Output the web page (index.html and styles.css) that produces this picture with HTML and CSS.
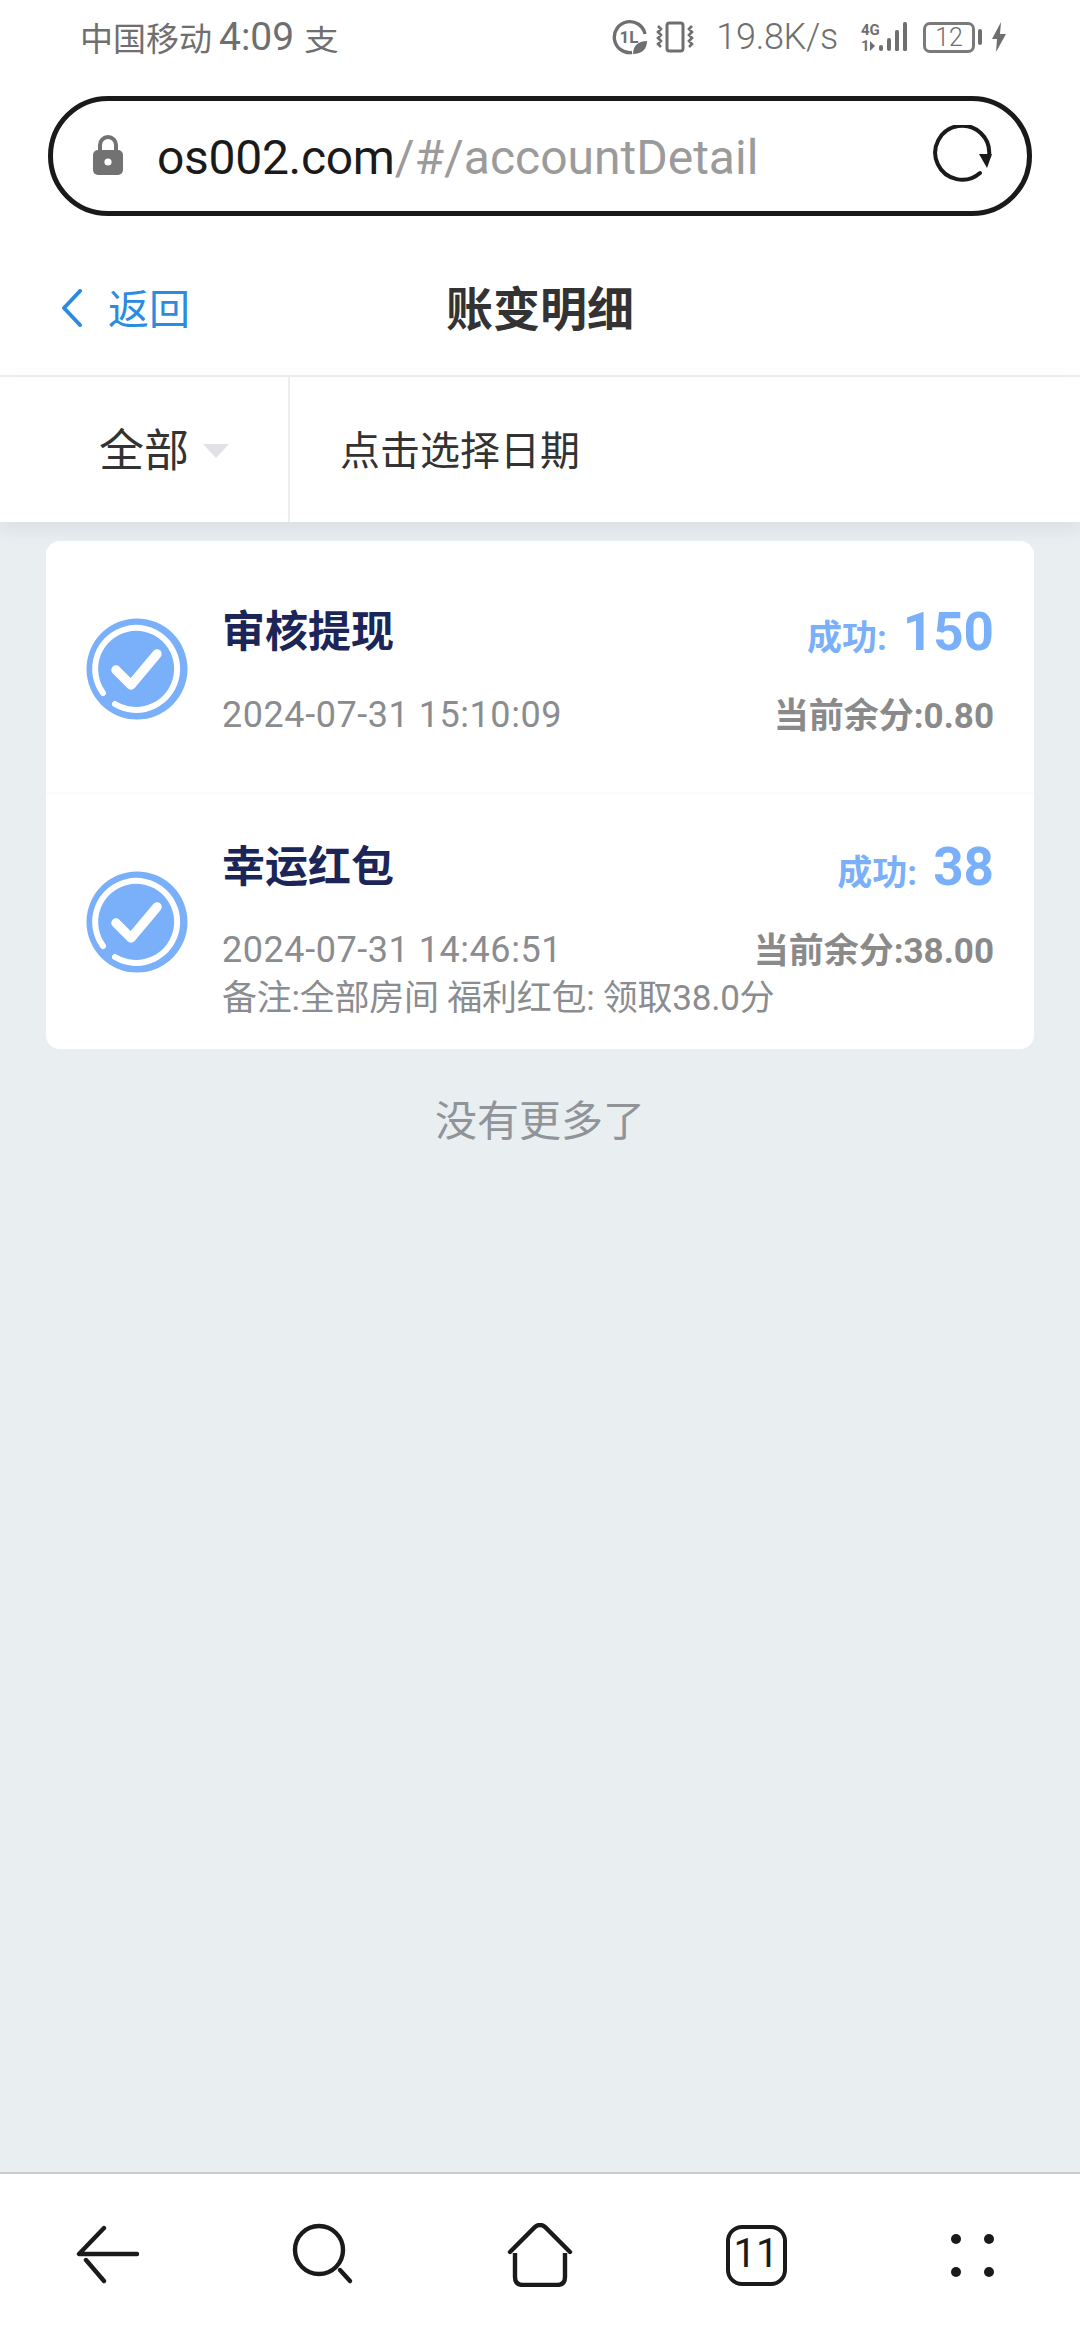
FILE: index.html
```html
<!DOCTYPE html>
<html lang="zh-CN">
<head>
<meta charset="utf-8">
<title>账变明细</title>
<link rel="stylesheet" href="styles.css">
</head>
<body>
<div class="page">
  <header class="status">
    <div class="status-left">
      <span class="carrier">中国移动</span>
      <span class="clock">4:09</span>
      <span class="alipay">支</span>
    </div>
    <div class="status-right">
      <svg class="ic-data" width="36" height="36" viewBox="0 0 36 36"><path d="M20 33.5A15.5 15.5 0 1 1 33 15" fill="none" stroke="#6f6f6f" stroke-width="3.4"/><text x="7.5" y="24" class="ic-data-text">1L</text><path d="M21 35c0-8 5-13 14-13 0 8-5 13-14 13z" fill="#6f6f6f"/></svg>
      <svg class="ic-vib" width="38" height="32" viewBox="0 0 38 32"><rect x="11" y="2" width="16" height="28" rx="2.5" fill="none" stroke="#6f6f6f" stroke-width="3"/><path d="M2 5l3 3-3 3 3 3-3 3 3 3-3 3 3 3M36 5l-3 3 3 3-3 3 3 3-3 3 3 3-3 3" fill="none" stroke="#6f6f6f" stroke-width="2.6"/></svg>
      <span class="speed">19.8K/s</span>
      <svg class="ic-sig" width="50" height="32" viewBox="0 0 50 32"><text x="1" y="14" class="ic-sig-text">4G</text><text x="1" y="30" class="ic-sig-text">1</text><path d="M10 20v10l5-5z" fill="#6f6f6f"/><rect x="19" y="24" width="4" height="6" rx="2" fill="#6f6f6f"/><rect x="27" y="17" width="4" height="13" rx="2" fill="#6f6f6f"/><rect x="35" y="9" width="4" height="21" rx="1.5" fill="#6f6f6f"/><rect x="43" y="1" width="4" height="29" rx="1.5" fill="#6f6f6f"/></svg>
      <div class="battery"><span class="battery-num">12</span></div>
      <span class="battery-nub"></span>
      <svg class="ic-bolt" width="14" height="30" viewBox="0 0 14 30"><path d="M9 0L0 17h5l-1 13 10-18H8z" fill="#6f6f6f"/></svg>
    </div>
  </header>

  <div class="urlwrap">
    <div class="urlbar">
      <svg class="lock" width="30" height="40" viewBox="0 0 30 40"><path d="M7 17v-7a8 8 0 0 1 16 0v7" fill="none" stroke="#727272" stroke-width="4"/><rect x="0" y="15" width="30" height="25" rx="5" fill="#727272"/><circle cx="15" cy="27" r="3.6" fill="#fff"/></svg>
      <div class="url"><span class="url-host">os002.com</span><span class="url-path">/#/accountDetail</span></div>
      <svg class="reload" width="62" height="62" viewBox="0 0 62 62"><path d="M49 48A27 27 0 1 1 58 31" fill="none" stroke="#1a1a1a" stroke-width="4" stroke-linecap="round"/><path d="M51 29h13l-5 14z" fill="#1a1a1a" transform="translate(-3 0)"/></svg>
    </div>
  </div>

  <nav class="topnav">
    <div class="back">
      <svg width="22" height="38" viewBox="0 0 22 38"><path d="M19 2L3 19l16 17" fill="none" stroke="#2b8ae2" stroke-width="4" stroke-linecap="round" stroke-linejoin="round"/></svg>
      <span class="back-text">返回</span>
    </div>
    <h1 class="title">账变明细</h1>
  </nav>

  <section class="filter">
    <div class="filter-type"><span class="filter-label">全部</span><i class="caret"></i></div>
    <div class="filter-date"><span class="filter-label">点击选择日期</span></div>
  </section>

  <main class="content">
    <div class="card">
      <div class="item item-first">
        <svg class="check" width="102" height="102" viewBox="0 0 102 102"><circle cx="51" cy="51" r="50.5" fill="#7aaffa"/><path d="M17 75A41 41 0 1 1 29 86" fill="none" stroke="#fff" stroke-width="6" stroke-linecap="round"/><path d="M30 52l15 15 26-31" fill="none" stroke="#fff" stroke-width="9.5" stroke-linecap="round" stroke-linejoin="round"/></svg>
        <div class="body body-a">
          <div class="row row-top"><span class="name">审核提现</span><span class="result"><span class="state">成功:</span><span class="amount">150</span></span></div>
          <div class="row row-sub"><span class="time">2024-07-31 15:10:09</span><span class="balance">当前余分:0.80</span></div>
        </div>
      </div>
      <div class="item">
        <svg class="check" width="102" height="102" viewBox="0 0 102 102"><circle cx="51" cy="51" r="50.5" fill="#7aaffa"/><path d="M17 75A41 41 0 1 1 29 86" fill="none" stroke="#fff" stroke-width="6" stroke-linecap="round"/><path d="M30 52l15 15 26-31" fill="none" stroke="#fff" stroke-width="9.5" stroke-linecap="round" stroke-linejoin="round"/></svg>
        <div class="body body-b">
          <div class="row row-top"><span class="name">幸运红包</span><span class="result"><span class="state">成功:</span><span class="amount">38</span></span></div>
          <div class="row row-sub"><span class="time">2024-07-31 14:46:51</span><span class="balance">当前余分:38.00</span></div>
          <div class="note">备注:全部房间 福利红包: 领取38.0分</div>
        </div>
      </div>
    </div>
    <p class="nomore">没有更多了</p>
  </main>

  <footer class="bottom">
    <div class="tab"><svg width="64" height="60" viewBox="0 0 64 60"><path d="M28 3L3 29h58M10 35l18 21" fill="none" stroke="#1a1a1a" stroke-width="4.4" stroke-linecap="round" stroke-linejoin="round"/></svg></div>
    <div class="tab"><svg width="64" height="64" viewBox="0 0 64 64"><circle cx="27" cy="27" r="24" fill="none" stroke="#1a1a1a" stroke-width="4.4"/><path d="M48 47l10 11" fill="none" stroke="#1a1a1a" stroke-width="4.4" stroke-linecap="round"/></svg></div>
    <div class="tab"><svg width="66" height="64" viewBox="0 0 66 64"><path d="M3 29L28 4q5-4 10 0l25 25" fill="none" stroke="#1a1a1a" stroke-width="4.4" stroke-linecap="round"/><path d="M8 30v24q0 8 8 8h34q8 0 8-8V30" fill="none" stroke="#1a1a1a" stroke-width="4.4"/></svg></div>
    <div class="tab"><div class="tabs-count">11</div></div>
    <div class="tab"><div class="dots"><i></i><i></i><i></i><i></i></div></div>
  </footer>
</div>
</body>
</html>
```
FILE: styles.css
```css
* { box-sizing: border-box; }
html, body { margin: 0; padding: 0; }
body { font-family: Roboto, "Noto Sans CJK SC", sans-serif; background: #e9eef1; }
.page { width: 1080px; height: 2340px; display: flex; flex-direction: column; background: #e9eef1; overflow: hidden; }

/* status bar */
.status { height: 74px; background: #fff; display: flex; justify-content: space-between; align-items: center; padding: 0 74px 0 80px; color: #6f6f6f; flex: none; }
.status-left { display: flex; align-items: center; }
.carrier { font-size: 33px; width: 139px; }
.clock { font-size: 39px; width: 88px; font-weight: 400; }
.alipay { font-size: 29px; transform: scaleX(1.2); margin-top: 2px; }
.status-right { display: flex; align-items: center; }
.ic-data { margin-right: 8px; }
.ic-data-text { font: 700 17px Roboto, sans-serif; fill: #6f6f6f; }
.speed { font-size: 36px; font-weight: 300; margin: 0 22px 0 22px; letter-spacing: -.3px; }
.ic-sig { overflow: visible; }
.ic-sig-text { font: 700 15px Roboto, sans-serif; fill: #6f6f6f; }
.battery { width: 52px; height: 31px; border: 3px solid #7a7a7a; border-radius: 7px; margin-left: 13px; display: flex; align-items: center; justify-content: center; }
.battery-num { font-size: 25px; font-weight: 300; line-height: 1; }
.battery-nub { width: 4px; height: 16px; background: #6f6f6f; border-radius: 2px; margin: 0 10px 0 3px; }

/* url bar */
.urlwrap { background: #fff; padding: 22px 48px 0; flex: none; }
.urlbar { height: 120px; border: 5px solid #1a1a1a; border-radius: 60px; display: flex; align-items: center; padding: 0 34px 0 40px; }
.lock { flex: none; margin-top: -2px; }
.url { flex: 1; font-size: 48px; margin-left: 34px; padding-top: 2px; white-space: nowrap; }
.url-host { color: #1a1a1a; letter-spacing: -.3px; }
.url-path { color: #9b9b9b; }
.reload { flex: none; }

/* page header */
.topnav { height: 161px; padding-top: 25px; background: #fff; border-bottom: 2px solid #eee; display: flex; align-items: center; position: relative; flex: none; }
.back { display: flex; align-items: center; margin-left: 61px; }
.back-text { color: #2b8ae2; font-size: 41px; margin-left: 25px; padding-bottom: 4px; }
.title { margin: 0; position: absolute; left: 0; right: 0; padding-bottom: 6px; text-align: center; font-size: 47px; font-weight: 700; color: #333; }

/* filter */
.filter { height: 145px; background: #fff; display: flex; flex: none; box-shadow: 0 8px 16px rgba(150,160,170,.18); position: relative; }
.filter-type { width: 290px; border-right: 2px solid #eee; display: flex; align-items: center; padding-left: 99px; font-size: 45px; color: #333; }
.filter-label { padding-bottom: 4px; }
.caret { width: 0; height: 0; border-left: 13px solid transparent; border-right: 13px solid transparent; border-top: 14px solid #e0e2e5; margin-left: 14px; margin-top: 2px; }
.filter-date { padding-left: 50px; display: flex; align-items: center; font-size: 40px; color: #333; }

/* list */
.content { flex: 1; padding: 19px 46px 0; }
.card { background: #fff; border-radius: 14px; overflow: hidden; }
.item { height: 253px; display: flex; align-items: center; padding: 0 40px 0 40px; border-bottom: 2px solid #fbfcfe; }
.item-first { padding-top: 5px; }
.item:last-child { height: 255px; border-bottom: 0; }
.check { flex: none; }
.body { flex: 1; align-self: flex-start; margin-left: 34px; }
.body-a { padding-top: 56px; }
.body-b { padding-top: 43px; }
.row { display: flex; justify-content: space-between; align-items: center; }
.row-top { height: 60px; margin-bottom: 27px; }
.row-sub { height: 49px; }
.name { font-size: 43px; font-weight: 700; color: #1c2558; padding-bottom: 8px; }
.result { display: flex; align-items: baseline; color: #7aaffa; font-weight: 700; }
.state { font-size: 35px; margin-right: 16px; }
.amount { font-size: 53px; }
.time { font-size: 36px; letter-spacing: .55px; color: #8a8c90; font-weight: 400; padding-top: 2px; }
.balance { font-size: 35px; font-weight: 700; color: #8a8a8a; padding-bottom: 2px; }
.note { font-size: 35px; line-height: 49px; margin-top: 1px; letter-spacing: -.25px; color: #8a8c90; white-space: nowrap; }
.nomore { margin: 49px 0 0; text-align: center; font-size: 42px; line-height: 48px; color: #909499; }

/* bottom bar */
.bottom { height: 168px; background: #fff; border-top: 2px solid #c9cdcd; display: flex; align-items: center; flex: none; }
.tab { width: 216px; display: flex; justify-content: center; padding-bottom: 4px; }
.tabs-count { width: 61px; height: 61px; border: 4.5px solid #1a1a1a; border-radius: 16px; font-size: 40px; line-height: 50px; text-align: center; color: #1a1a1a; }
.dots { display: grid; grid-template-columns: 10px 10px; gap: 23px; }
.dots i { width: 10px; height: 10px; border-radius: 50%; background: #1a1a1a; }
```
